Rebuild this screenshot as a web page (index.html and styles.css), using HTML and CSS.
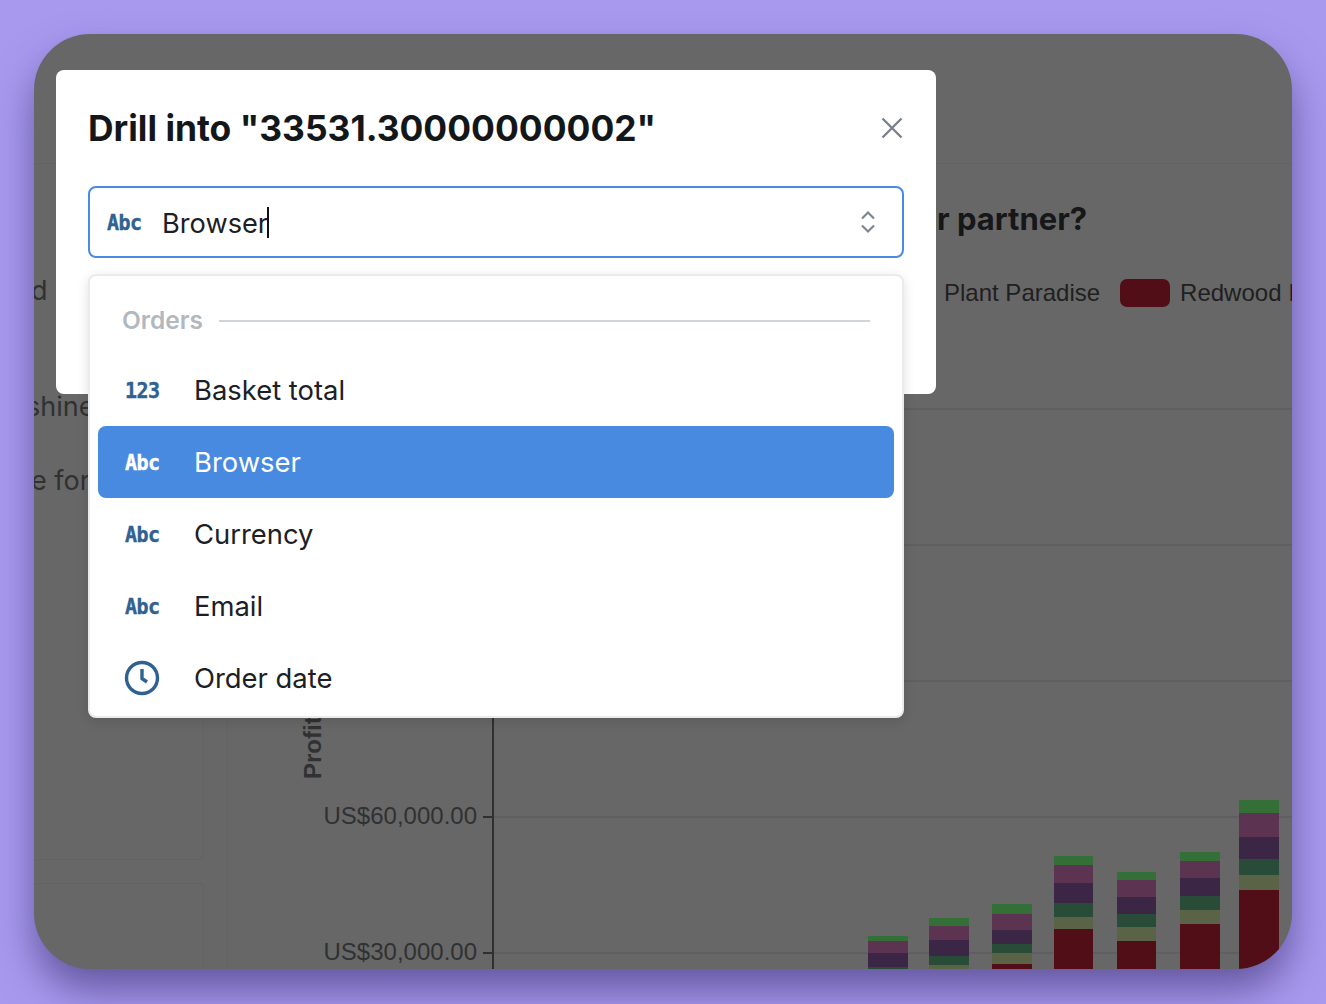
FILE: index.html
```html
<!DOCTYPE html>
<html lang="en">
<head>
<meta charset="utf-8">
<title>Drill into</title>
<link rel="stylesheet" href="styles.css">
</head>
<body>
<div class="frame">
  <div class="dashboard">
    <div class="dash-header"></div>
    <div class="dash-main">
      <div class="side">
        <div class="side-card">
          <p class="side-text side-a">d</p>
          <p class="side-text side-b">shine</p>
          <p class="side-text side-c">e for</p>
        </div>
        <div class="side-card side-card-low"></div>
      </div>
      <div class="chart-card">
        <h2 class="chart-title">r partner?</h2>
        <div class="legend">
          <span>Plant Paradise</span>
          <i class="swatch"></i>
          <span>Redwood Inc</span>
        </div>
        <svg class="chart" width="1065" height="629" viewBox="227 340 1065 629">
          <g class="grid">
            <path d="M493 409H1292M493 545H1292M493 681H1292M493 817H1292M493 953H1292"/>
          </g>
          <g class="axis">
            <path d="M493 340V969M483 817H493M483 953H493"/>
          </g>
          <text class="tick" x="477" y="824" text-anchor="end">US$60,000.00</text>
          <text class="tick" x="477" y="960" text-anchor="end">US$30,000.00</text>
          <text class="axis-title" transform="translate(321 779) rotate(-90)">Profit</text>
          <g class="s-green">
            <rect x="868" y="936" width="40" height="5"/><rect x="929" y="918" width="40" height="8"/><rect x="992" y="904" width="40" height="10"/><rect x="1054" y="856" width="39" height="9"/><rect x="1117" y="872" width="39" height="8"/><rect x="1180" y="852" width="40" height="9"/><rect x="1239" y="800" width="40" height="13"/>
          </g>
          <g class="s-pink">
            <rect x="868" y="941" width="40" height="12"/><rect x="929" y="926" width="40" height="14"/><rect x="992" y="914" width="40" height="16"/><rect x="1054" y="865" width="39" height="18"/><rect x="1117" y="880" width="39" height="17"/><rect x="1180" y="861" width="40" height="17"/><rect x="1239" y="813" width="40" height="24"/>
          </g>
          <g class="s-purple">
            <rect x="868" y="953" width="40" height="14"/><rect x="929" y="940" width="40" height="16"/><rect x="992" y="930" width="40" height="14"/><rect x="1054" y="883" width="39" height="20"/><rect x="1117" y="897" width="39" height="17"/><rect x="1180" y="878" width="40" height="18"/><rect x="1239" y="837" width="40" height="22"/>
          </g>
          <g class="s-forest">
            <rect x="868" y="967" width="40" height="2"/><rect x="929" y="956" width="40" height="9"/><rect x="992" y="944" width="40" height="9"/><rect x="1054" y="903" width="39" height="14"/><rect x="1117" y="914" width="39" height="13"/><rect x="1180" y="896" width="40" height="14"/><rect x="1239" y="859" width="40" height="16"/>
          </g>
          <g class="s-olive">
            <rect x="929" y="965" width="40" height="4"/><rect x="992" y="953" width="40" height="11"/><rect x="1054" y="917" width="39" height="12"/><rect x="1117" y="927" width="39" height="14"/><rect x="1180" y="910" width="40" height="14"/><rect x="1239" y="875" width="40" height="15"/>
          </g>
          <g class="s-red">
            <rect x="992" y="964" width="40" height="5"/><rect x="1054" y="929" width="39" height="40"/><rect x="1117" y="941" width="39" height="28"/><rect x="1180" y="924" width="40" height="45"/><rect x="1239" y="890" width="40" height="79"/>
          </g>
        </svg>
      </div>
    </div>
  </div>

  <div class="modal">
    <div class="modal-head">
      <h1 class="modal-title">Drill into "33531.30000000002"</h1>
      <svg class="close" width="22" height="22" viewBox="0 0 22 22"><path d="M1.5 1.5L20.5 20.5M20.5 1.5L1.5 20.5"/></svg>
    </div>
    <div class="picker">
      <div class="field">
        <span class="type-icon">Abc</span>
        <span class="field-text">Browser</span><span class="caret"></span>
        <svg class="chevrons" width="16" height="24" viewBox="0 0 16 24"><path d="M2 8.5L8 2.5L14 8.5M2 15.5L8 21.5L14 15.5"/></svg>
      </div>
      <div class="menu">
        <div class="group"><span class="group-name">Orders</span><span class="group-line"></span></div>
        <div class="item"><span class="type-icon">123</span><span>Basket total</span></div>
        <div class="item item-active"><span class="type-icon">Abc</span><span>Browser</span></div>
        <div class="item"><span class="type-icon">Abc</span><span>Currency</span></div>
        <div class="item"><span class="type-icon">Abc</span><span>Email</span></div>
        <div class="item">
          <svg class="clock" width="36" height="36" viewBox="0 0 36 36"><circle cx="18" cy="18" r="15.5"/><path d="M18 9V18.5L23 22"/></svg>
          <span>Order date</span>
        </div>
      </div>
    </div>
  </div>
</div>
</body>
</html>
```

FILE: styles.css
```css
* { box-sizing: border-box; }
html, body { margin: 0; height: 100%; }
body {
  background: #a899ef;
  padding: 34px;
  overflow: hidden;
  font-family: Inter, "Liberation Sans", sans-serif;
}
.frame {
  position: relative;
  width: 1258px;
  height: 935px;
  border-radius: 56px;
  background: #676767;
  box-shadow: 0 22px 40px -2px rgba(40, 30, 90, .55);
}
.dashboard {
  height: 100%;
  border-radius: 56px;
  overflow: hidden;
  display: flex;
  flex-direction: column;
}
.dash-header { height: 130px; flex: none; border-bottom: 1px solid #636363; }
.dash-main { flex: 1; display: flex; min-height: 0; gap: 23px; }
.side { width: 170px; flex: none; display: flex; flex-direction: column; gap: 23px; }
.side-card {
  height: 696px;
  flex: none;
  padding-top: 109px;
  border-right: 1px solid #636363;
  border-bottom: 1px solid #636363;
  border-radius: 0 0 4px 0;
}
.side-card-low {
  flex: 1;
  height: auto;
  padding: 0;
  border-bottom: 0;
  border-top: 1px solid #636363;
  border-radius: 0 4px 0 0;
}
.side-text { margin: 0; font-size: 27px; line-height: 36px; color: #303132; white-space: nowrap; }
.side-a { margin-left: -3px; }
.side-b { margin: 80px 0 0 -8px; }
.side-c { margin: 38px 0 0 -3px; }
.chart-card {
  flex: 1;
  min-width: 0;
  display: flex;
  flex-direction: column;
  border-left: 1px solid #636363;
  overflow: hidden;
}
.chart-title {
  margin: 37px 0 0;
  padding-left: 709px;
  font-size: 31px;
  line-height: 36px;
  font-weight: 700;
  color: #161718;
  white-space: nowrap;
}
.legend {
  margin-top: 42px;
  padding-left: 716px;
  display: flex;
  align-items: center;
  height: 28px;
  font: 24px/28px "Liberation Sans", sans-serif;
  color: #1f2020;
  white-space: nowrap;
}
.swatch {
  flex: none;
  width: 50px;
  height: 28px;
  margin: 0 10px 0 20px;
  border-radius: 7px;
  background: #520e17;
}
.chart { display: block; flex: none; margin-top: 33px; margin-left: -1px; }
.grid path { fill: none; stroke: #5e5f63; stroke-width: 2; }
.axis path { fill: none; stroke: #2f3031; stroke-width: 2; }
.tick { font: 24px "Liberation Sans", sans-serif; fill: #303132; }
.axis-title { font: 700 24px "Liberation Sans", sans-serif; fill: #303132; }
.s-green { fill: #356f38; }
.s-pink { fill: #5c3351; }
.s-purple { fill: #3b2745; }
.s-forest { fill: #294c39; }
.s-olive { fill: #5a6345; }
.s-red { fill: #520e17; }

.modal {
  position: absolute;
  left: 22px;
  top: 36px;
  width: 880px;
  height: 324px;
  padding: 32px;
  background: #fff;
  border-radius: 8px;
}
.modal-head { display: flex; align-items: center; justify-content: space-between; height: 52px; }
.modal-title { margin: 2px 0 0; font-size: 35.4px; line-height: 52px; font-weight: 700; color: #14171a; white-space: nowrap; }
.close { margin-right: 1px; }
.close path { fill: none; stroke: #7a8289; stroke-width: 2.4; }
.picker { position: relative; margin-top: 32px; }
.field {
  height: 72px;
  display: flex;
  align-items: center;
  padding-left: 17px;
  border: 2px solid #4a8ae0;
  border-radius: 8px;
  font-size: 27.2px;
  color: #1c2024;
}
.field-text { margin: 2px 0 0 21px; }
.caret { width: 2px; height: 31px; margin-left: -1px; background: #111; }
.chevrons { margin-left: auto; margin-right: 26px; }
.chevrons path { fill: none; stroke: #7f878e; stroke-width: 2.2; }
.type-icon {
  flex: none;
  width: 34px;
  font: 700 20px/1 "DejaVu Sans Mono", monospace;
  letter-spacing: -.6px;
  color: #2f6191;
  transform: scaleY(1.08);
  -webkit-text-stroke: .4px currentColor;
}
.menu {
  position: absolute;
  left: 0;
  right: 0;
  top: 88px;
  height: 444px;
  padding: 0 8px;
  background: #fff;
  border: 2px solid #e9ebed;
  border-radius: 8px;
  box-shadow: 0 3px 12px rgba(0, 0, 0, .12);
}
.group { height: 78px; display: flex; align-items: center; gap: 16px; padding: 12px 24px 0 24px; }
.group-name { margin-top: -2px; font-size: 24.5px; font-weight: 600; color: #b2b8be; }
.group-line { flex: 1; height: 2px; background: #ced4d9; }
.item {
  height: 72px;
  display: flex;
  align-items: center;
  gap: 35px;
  padding-left: 27px;
  border-radius: 8px;
  font-size: 27.4px;
  color: #1c2024;
}
.item-active { background: #478ae0; color: #fff; }
.item-active .type-icon { color: #fff; }
.clock { flex: none; margin-left: -1px; margin-right: -1px; }
.clock circle, .clock path { fill: none; stroke: #2f6191; stroke-width: 3.4; }
```
